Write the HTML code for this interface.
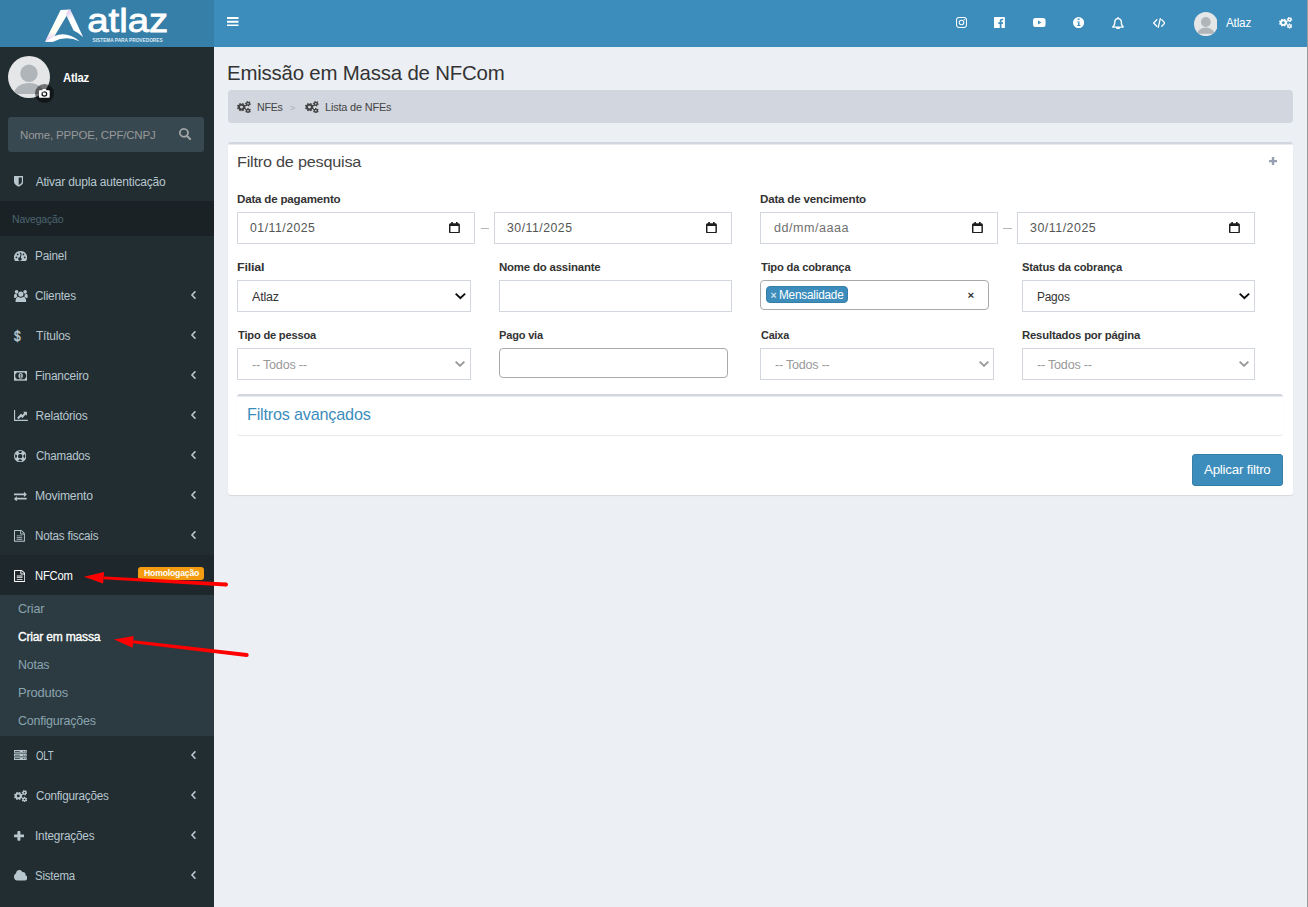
<!DOCTYPE html>
<html lang="pt-br">
<head>
<meta charset="utf-8">
<title>Emissão em Massa de NFCom</title>
<style>
*{box-sizing:border-box}
html,body{margin:0;padding:0}
body{width:1308px;height:907px;overflow:hidden;position:relative;background:#ecf0f5;font-family:"Liberation Sans",sans-serif;font-size:12px;letter-spacing:-0.2px;color:#333;line-height:16px}
svg{display:block;position:absolute}
div,span,h1,h3,a,label,button{position:absolute;white-space:nowrap;margin:0;padding:0;transform-origin:0 50%}
#logo{left:0;top:0;width:214px;height:46.5px;background:#367fa9}
#navbar{left:214px;top:0;width:1094px;height:46.5px;background:#3c8dbc;color:#fff}
#navname{left:1012px;top:15px;font-size:12.2px;line-height:16px;color:#fff}
#sidebar{left:0;top:46.5px;width:214px;height:860.5px;background:#222d32;color:#b8c7ce}
#uname{left:63.5px;top:70px;font-weight:700;font-size:12px;color:#fff;line-height:16px}
#search{left:8px;top:116.5px;width:196px;height:35.5px;background:#374850;border-radius:3px}
#ph{left:13px;top:1px;line-height:35.5px;font-size:11.8px;color:#999}
.navhdr{left:0;top:201px;width:214px;height:35px;background:#1a2226;color:#4b646f;font-size:10.4px}
#navhdr{left:12.7px;top:1.2px;line-height:35px}
.mi{left:0;width:214px;height:40px;color:#b8c7ce}
.mi.act{background:#1e282c;color:#fff}
.mi .tx{left:35.3px;top:0;line-height:40px;font-size:12px}
.mi .dl{left:14.3px;top:0;line-height:40px;font-size:14px;letter-spacing:0;-webkit-text-stroke:.45px #b8c7ce;transform:scaleX(.86)}
#submenu{left:0;top:595px;width:214px;height:141px;background:#2c3b41}
.sub{left:17.8px;color:#8aa4af;font-size:12.2px;line-height:28px}
.sub.on{color:#fff;-webkit-text-stroke:.35px #fff}
#bdg{left:138px;top:567.3px;width:66px;height:12.6px;background:#f39c12;border-radius:3px;color:#fff}
#badge{left:5.5px;top:0;line-height:12.6px;font-size:8.6px;font-weight:700}
h1{left:228.5px;top:59.2px;font-weight:400;font-size:20.6px;line-height:28px;color:#333}
#bc{left:228px;top:90px;width:1065px;height:33px;background:#d2d6de;border-radius:4px;font-size:11.2px;color:#444}
#bc span{top:1px;line-height:33px}
#box{left:228px;top:142px;width:1065px;height:353px;background:#fff;border-top:3px solid #d2d6de;border-radius:3px;box-shadow:0 1px 1px rgba(0,0,0,.1)}
#box h3{left:9.6px;top:5.4px;font-size:15.4px;line-height:24px;font-weight:400;color:#444}
.lbl{font-weight:700;font-size:11.8px;line-height:16px;color:#333}
.fc{height:31.6px;border:1px solid #d2d6de;background:#fff;font-size:12px;color:#555}
.fc span{left:14.2px;top:1px;line-height:30.6px}
.fc.dt span{left:12.6px;top:0;letter-spacing:.5px}
.fc.ph span{color:#999}
#d3{color:#707070}
.fc.dk span{color:#333}
.s2{border:1px solid #aaa;border-radius:4px;background:#fff}
#tagb{left:5px;top:5.3px;width:82px;height:17px;background:#3c8dbc;border:1px solid #367fa9;border-radius:4px;color:#fff;font-size:12px}
#inner{left:9px;top:249px;width:1046px;height:41px;background:#fff;border-top:3px solid #d2d6de;border-radius:3px;box-shadow:0 1px 1px rgba(0,0,0,.1)}
#adv{left:10.6px;top:6px;font-size:15.7px;line-height:24px;color:#3c8dbc}
#btnb{left:964px;top:309px;width:91px;height:32px;background:#3c8dbc;border:1px solid #367fa9;border-radius:3px;color:#fff;font-size:12.6px}
#btn{left:11px;top:0;line-height:30px}
#edge{left:1307px;top:0;width:1px;height:907px;background:#9a9a9a}
</style>
</head>
<body>

<div id="logo">
<svg viewBox="0 0 214 46.5" width="214" height="46.5" style="left:0;top:0">
<defs><linearGradient id="lg1" x1="0" y1="0" x2="0" y2="1"><stop offset="0" stop-color="#fff"/><stop offset=".7" stop-color="#fffff4"/><stop offset="1" stop-color="#dcc4ee"/></linearGradient>
<linearGradient id="lg2" x1="0" y1="0" x2="0.3" y2="1"><stop offset="0" stop-color="#d9c0ec"/><stop offset=".4" stop-color="#fff"/><stop offset="1" stop-color="#fff"/></linearGradient></defs>
<path d="M60.6 10 L70.3 9.6 L54.6 36.1 L53 41.7 L44.9 41.7 Z" fill="url(#lg1)"/>
<path d="M70.3 9.6 L83.1 37.1 Q78.5 32.800 73.6 30.6 L65.9 14.5 L68.5 9.700 Z" fill="url(#lg2)"/>
<path d="M44.9 41.7 L54.6 36 Q67 31 79.6 41.2 Q66 35 53.2 41.7 Z" fill="#fff"/>
<text x="87.2" y="32.2" font-family="Liberation Sans, sans-serif" font-size="33.8" letter-spacing="0" fill="#fff" stroke="#fff" stroke-width=".8" textLength="81" lengthAdjust="spacingAndGlyphs">atlaz</text>
<text x="92.6" y="41.7" font-family="Liberation Sans, sans-serif" font-size="4.9" letter-spacing="0" font-weight="700" fill="#dfeaf2" textLength="70" lengthAdjust="spacingAndGlyphs">SISTEMA PARA PROVEDORES</text>
</svg>
</div>
<div id="navbar">
<svg viewBox="0 1 12 10" preserveAspectRatio="none" width="11.50" height="9.40" fill="#fff" style="left:13.10px;top:16.80px;color:#fff"><path d="M0 1h12v2H0zM0 5h12v2H0zM0 9h12v2H0z"/></svg>
<svg viewBox="0.7 0.7 14.6 14.6" preserveAspectRatio="none" width="11.00" height="11.00" fill="#fff" style="left:741.90px;top:17.00px;color:#fff"><path fill-rule="evenodd" d="M4.600.7h6.800c2.200 0 3.900 1.700 3.900 3.900v6.800c0 2.200-1.700 3.900-3.900 3.900H4.600C2.400 15.300.7 13.600.7 11.400V4.600C.7 2.400 2.400.7 4.600.7zm.1 1.400c-1.500 0-2.600 1.100-2.600 2.600v6.600c0 1.500 1.100 2.600 2.600 2.600h6.600c1.500 0 2.600-1.100 2.600-2.600V4.700c0-1.500-1.100-2.600-2.600-2.600zM8 4.300a3.700 3.700 0 1 1 0 7.400 3.700 3.700 0 0 1 0-7.400zm0 1.300a2.400 2.400 0 1 0 0 4.800 2.400 2.400 0 0 0 0-4.800zm3.900-2.400a.9.900 0 1 1 0 1.800.9.900 0 0 1 0-1.800z"/></svg>
<svg viewBox="0.7 0.7 14.6 14.6" preserveAspectRatio="none" width="10.90" height="11.20" fill="#fff" style="left:780.30px;top:17.00px;color:#fff"><path d="M14.400.7c.5 0 .9.400.9.900v12.800c0 .5-.4.900-.9.900h-3.700V9.700h1.900l.3-2.200h-2.200V6.100c0-.6.200-1.100 1.100-1.100h1.200V3.100c-.2 0-.9-.1-1.700-.1-1.700 0-2.900 1-2.900 2.900v1.600H6.500v2.200h1.900v5.600H1.600c-.5 0-.9-.4-.9-.9V1.600c0-.5.400-.9.900-.9z"/></svg>
<svg viewBox="0 0.4 16 11.2" preserveAspectRatio="none" width="12.60" height="9.00" fill="#fff" style="left:819.00px;top:18.00px;color:#fff"><path fill-rule="evenodd" d="M15.700 2.100c.3 1.300.3 3.900.3 3.900s0 2.600-.3 3.900c-.2.700-.7 1.200-1.400 1.400-1.300.3-6.300.3-6.300.3s-5 0-6.300-.3C1 11.100.5 10.600.3 9.900 0 8.600 0 6 0 6s0-2.600.3-3.900C.5 1.400 1 .900 1.700.700 3 .4 8 .4 8 .4s5 0 6.300.3c.7.200 1.200.7 1.400 1.400zM6.400 3.600v4.800L10.600 6z"/></svg>
<svg viewBox="0.6 0.6 14.8 14.8" preserveAspectRatio="none" width="11.20" height="11.20" fill="#fff" style="left:859.10px;top:17.00px;color:#fff"><path fill-rule="evenodd" d="M8 .6a7.400 7.400 0 1 1 0 14.800A7.400 7.400 0 0 1 8 .6zM6.800 2.700v1.900h2.400V2.700zm-.6 3.700v1.200h1.200v3.700H6.200v1.200h4.200v-1.200H9.200V6.400z"/></svg>
<svg viewBox="0.7 0 14.6 16" preserveAspectRatio="none" width="12.10" height="12.60" fill="#fff" style="left:898.20px;top:16.50px;color:#fff"><path fill-rule="evenodd" d="M8 0c.6 0 1 .4 1 1v.4c2.300.5 3.800 2.400 3.800 4.900 0 3.400 1.200 4.900 2.500 6 0 .7-.6 1.200-1.200 1.200h-3.700c0 1.400-1.100 2.500-2.400 2.500S5.600 14.900 5.600 13.500H1.900c-.6 0-1.200-.5-1.200-1.200 1.300-1.100 2.500-2.600 2.500-6C3.200 3.800 4.700 1.900 7 1.400V1c0-.6.400-1 1-1zm0 3c-1.800 0-3.100 1.400-3.100 3.400 0 2.700-.7 4.500-1.700 5.700h9.600c-1-1.200-1.700-3-1.700-5.700 0-2-1.300-3.400-3.100-3.400z"/></svg>
<svg viewBox="0.3 0.1 17.4 13.8" preserveAspectRatio="none" width="12.60" height="10.00" fill="#fff" style="left:938.70px;top:18.00px;color:#fff"><path d="M5.600 2.600 1.200 7l4.400 4.400M12.400 2.600 16.800 7l-4.400 4.400M10.400 1 7.600 13" fill="none" stroke="currentColor" stroke-width="1.800" stroke-linecap="round" stroke-linejoin="round"/></svg>
<svg viewBox="0 0 42 42" width="23.7" height="24.2" preserveAspectRatio="none" style="left:979.7px;top:11.8px"><defs><clipPath id="c1"><circle cx="21" cy="21" r="21"/></clipPath></defs><circle cx="21" cy="21" r="21" fill="#e4e6e7"/><g clip-path="url(#c1)" fill="#b0b5b9"><circle cx="21" cy="17.3" r="8.7"/><path d="M6 37.900A15 10.900 0 0 1 36 37.900z"/></g></svg>
<span id="navname" style="margin-left:0.10px;transform:scaleX(0.9600)">Atlaz</span>
<svg viewBox="0.15 -0.08 16.65 16.12" preserveAspectRatio="none" width="13.40" height="11.60" fill="#fff" style="left:1065.30px;top:17.00px;color:#fff"><path fill-rule="evenodd" d="M9.94 8.50 L10.85 9.08 L10.19 10.67 L9.14 10.45 L8.15 11.44 L8.37 12.49 L6.78 13.15 L6.20 12.24 L4.80 12.24 L4.22 13.15 L2.63 12.49 L2.85 11.44 L1.86 10.45 L0.81 10.67 L0.15 9.08 L1.06 8.50 L1.06 7.10 L0.15 6.52 L0.81 4.93 L1.86 5.15 L2.85 4.16 L2.63 3.11 L4.22 2.45 L4.80 3.36 L6.20 3.36 L6.78 2.45 L8.37 3.11 L8.15 4.16 L9.14 5.15 L10.19 4.93 L10.85 6.52 L9.94 7.10ZM3.70 7.80a1.80 1.80 0 1 0 3.60 0a1.80 1.80 0 1 0 -3.60 0ZM15.88 3.19 L16.80 3.47 L16.50 4.93 L15.55 4.83 L14.81 5.67 L15.03 6.60 L13.61 7.08 L13.23 6.20 L12.13 5.98 L11.43 6.63 L10.31 5.64 L10.87 4.87 L10.52 3.81 L9.60 3.53 L9.90 2.07 L10.85 2.17 L11.59 1.33 L11.37 0.40 L12.79 -0.08 L13.17 0.80 L14.27 1.02 L14.97 0.37 L16.09 1.36 L15.53 2.13ZM12.25 3.50a0.95 0.95 0 1 0 1.90 0a0.95 0.95 0 1 0 -1.90 0ZM15.85 13.00 L16.65 13.53 L15.93 14.85 L15.05 14.46 L14.09 15.05 L14.03 16.00 L12.53 16.04 L12.43 15.09 L11.44 14.55 L10.58 14.97 L9.80 13.69 L10.57 13.12 L10.55 12.00 L9.75 11.47 L10.47 10.15 L11.35 10.54 L12.31 9.95 L12.37 9.00 L13.87 8.96 L13.97 9.91 L14.96 10.45 L15.82 10.03 L16.60 11.31 L15.83 11.88ZM12.25 12.50a0.95 0.95 0 1 0 1.90 0a0.95 0.95 0 1 0 -1.90 0Z"/></svg>
</div>
<div id="sidebar">
<div style="left:0;top:-46.5px;width:214px;height:907px">
<svg viewBox="0 0 42 42" width="42" height="42" style="left:8px;top:56px"><defs><clipPath id="c2"><circle cx="21" cy="21" r="21"/></clipPath></defs><circle cx="21" cy="21" r="21" fill="#e4e6e7"/><g clip-path="url(#c2)" fill="#b0b5b9"><circle cx="21" cy="17.3" r="8.7"/><path d="M6 37.900A15 10.900 0 0 1 36 37.900z"/></g></svg>
<div style="left:35px;top:84px;width:19px;height:19px;border-radius:9.5px;background:rgba(0,0,0,.5)"></div>
<svg viewBox="1 1.5 14 13" preserveAspectRatio="none" width="10.70" height="8.80" fill="#fff" style="left:39.30px;top:89.10px;color:#fff"><path fill-rule="evenodd" d="M5.500 2.500C5.700 1.800 6 1.500 6.600 1.500h2.800c.6 0 .9.300 1.100 1l.3.900h2.800c.8 0 1.400.600 1.400 1.400v8.300c0 .8-.6 1.400-1.400 1.400H2.400c-.8 0-1.400-.6-1.400-1.400V4.800c0-.8.600-1.400 1.400-1.400h2.800zM8 5a3.900 3.900 0 1 0 0 7.800A3.900 3.900 0 0 0 8 5zm0 1.700a2.200 2.200 0 1 1 0 4.400 2.200 2.200 0 0 1 0-4.400z"/></svg>
<span id="uname" style="margin-left:-0.30px;transform:scaleX(0.9428)">Atlaz</span>
<div id="search"><span id="ph" style="margin-left:-0.65px;transform:scaleX(0.9774)">Nome, PPPOE, CPF/CNPJ</span><svg viewBox="0.608 0.5 14.867 15.275" preserveAspectRatio="none" width="12.40" height="12.30" fill="#a2a5a6" style="left:170.70px;top:11.30px;color:#a2a5a6"><path fill-rule="evenodd" d="M6.500.5a6 6 0 0 1 4.900 9.400l3.700 3.700c.5.500.5 1.300 0 1.800s-1.300.500-1.800 0L9.600 11.700A6 6 0 1 1 6.500.5zm0 2.200a3.800 3.800 0 1 0 0 7.600 3.800 3.800 0 0 0 0-7.600z"/></svg></div>
<div class="mi" style="top:161.5px"><svg viewBox="1 0.8 12 14.375" preserveAspectRatio="none" width="9.40" height="10.60" fill="currentColor" style="left:14.00px;top:14.80px"><path fill-rule="evenodd" d="M1 1.500c0-.4.300-.700.700-.700h10.600c.4 0 .7.300.7.700v7c0 3.600-4.500 6-5.700 6.600-.2.100-.4.100-.6 0C5.500 14.500 1 12.100 1 8.500zM11 2.800H7v10.300c1.500-.8 4-2.500 4-4.600z"/></svg><span id="m_ativar" class="tx" style="margin-left:0.36px">Ativar dupla autenticação</span></div>
<div class="navhdr"><span id="navhdr" style="margin-left:-0.42px;transform:scaleX(1.0114)">Navegação</span></div>
<div class="mi" style="top:237.0px">
<svg viewBox="0.589 1.6 14.822 11.9" preserveAspectRatio="none" width="13.10" height="10.40" fill="currentColor" style="left:14.00px;top:13.90px"><path d="M8 1.6A7.4 7.4 0 0 0 1.7 12.9c.2.4.6.6 1 .6h10.6c.4 0 .8-.2 1-.6A7.4 7.4 0 0 0 8 1.6z"/><g fill="#222d32"><circle cx="3.3" cy="9" r="1"/><circle cx="4.7" cy="5.6" r="1"/><circle cx="8" cy="4.2" r="1"/><circle cx="11.3" cy="5.6" r="1"/><circle cx="12.7" cy="9" r="1"/><path d="M9.3 5.4l-1 3.8a1.9 1.9 0 1 1-1.1-.3l1-3.8z"/></g></svg>
<span id="m_Painel" class="tx" style="line-height:39.2px;margin-left:-0.19px;transform:scaleX(0.9816)">Painel</span>
</div>
<div class="mi" style="top:277.0px">
<svg viewBox="0 0.6 16 14.6" preserveAspectRatio="none" width="13.70" height="12.80" fill="currentColor" style="left:14.00px;top:12.50px"><circle cx="8" cy="5.2" r="3"/><path d="M3.500 15.2c-1 0-1.700-.6-1.700-1.600 0-2.800.9-5.300 3.200-5.300.8.800 1.900 1.200 3 1.200s2.200-.4 3-1.200c2.300 0 3.200 2.500 3.200 5.300 0 1-.7 1.600-1.700 1.600z"/><circle cx="3" cy="2.700" r="2.100"/><circle cx="13" cy="2.700" r="2.100"/><path d="M0 7.700c0-1.600.5-2.700 1.800-2.700.5.500 1.200.700 1.900.600-.2.500-.3 1.100-.2 1.700.1.400.2.800.4 1.200-1.100 0-1.800.500-2.300 1.300H1c-.6 0-1-.400-1-1.100zM16 7.700c0-1.600-.5-2.700-1.800-2.700-.5.500-1.200.700-1.900.600.2.500.3 1.100.2 1.700-.1.400-.2.800-.4 1.200 1.100 0 1.800.500 2.300 1.300H15c.6 0 1-.400 1-1.100z"/></svg>
<span id="m_Clientes" class="tx" style="line-height:39.2px;margin-left:-0.30px;transform:scaleX(0.9779)">Clientes</span>
<svg viewBox="0.65 1.45 5.8 10.1" preserveAspectRatio="none" width="4.80" height="8.00" fill="currentColor" style="left:190.80px;top:14.30px"><path d="M6.3 2.200c.2.200.2.500 0 .7L3.100 6.500l3.200 3.600c.2.200.2.500 0 .7l-.6.600c-.2.200-.5.200-.7 0L.8 6.900c-.2-.2-.2-.5 0-.7L5 1.600c.2-.2.500-.2.700 0z"/></svg>
</div>
<div class="mi" style="top:317.0px">
<span class="dl" style="line-height:39.2px">$</span>
<span id="m_Titulos" class="tx" style="line-height:39.2px;margin-left:0.30px;transform:scaleX(0.9924)">Títulos</span>
<svg viewBox="0.65 1.45 5.8 10.1" preserveAspectRatio="none" width="4.80" height="8.00" fill="currentColor" style="left:190.80px;top:14.30px"><path d="M6.3 2.200c.2.200.2.500 0 .7L3.100 6.500l3.200 3.600c.2.200.2.500 0 .7l-.6.600c-.2.200-.5.200-.7 0L.8 6.900c-.2-.2-.2-.5 0-.7L5 1.600c.2-.2.500-.2.700 0z"/></svg>
</div>
<div class="mi" style="top:357.0px">
<svg viewBox="0 3 16 10" preserveAspectRatio="none" width="13.40" height="9.70" fill="currentColor" style="left:14.10px;top:13.90px"><path d="M0 3h16v10H0z"/><g fill="#222d32"><path d="M1.500 6.200A2 2 0 0 0 3.200 4.500h9.600a2 2 0 0 0 1.700 1.700v3.600a2 2 0 0 0-1.700 1.700H3.200a2 2 0 0 0-1.700-1.700z"/></g><ellipse cx="8" cy="8" rx="2.600" ry="3"/><path fill="#222d32" d="M7 9.300h.7V7.100l-.6.200v-.6l1-.5h.5v3.100H9v.6H7z"/></svg>
<span id="m_Financeiro" class="tx" style="line-height:39.2px;margin-left:-0.29px;transform:scaleX(0.9913)">Financeiro</span>
<svg viewBox="0.65 1.45 5.8 10.1" preserveAspectRatio="none" width="4.80" height="8.00" fill="currentColor" style="left:190.80px;top:14.30px"><path d="M6.3 2.200c.2.200.2.500 0 .7L3.100 6.500l3.200 3.600c.2.200.2.500 0 .7l-.6.600c-.2.200-.5.200-.7 0L.8 6.900c-.2-.2-.2-.5 0-.7L5 1.600c.2-.2.500-.2.700 0z"/></svg>
</div>
<div class="mi" style="top:397.0px">
<svg viewBox="0 2 16 12" preserveAspectRatio="none" width="13.80" height="11.00" fill="currentColor" style="left:14.10px;top:13.20px"><path d="M0 2h1.300v10.700H16V14H0z"/><path d="M15 4.200v3.600c0 .3-.3.400-.5.200l-1-1-3.600 3.600c-.1.100-.3.100-.4 0L8.200 9.300 5.300 12.200l-1.700-1.700L8 6.100c.1-.1.300-.1.400 0l1.300 1.300L11.800 5.300l-1-1c-.2-.2-.1-.5.200-.5h3.600c.2 0 .4.200.4.400z"/></svg>
<span id="m_Relatorios" class="tx" style="line-height:39.2px;margin-left:0.21px">Relatórios</span>
<svg viewBox="0.65 1.45 5.8 10.1" preserveAspectRatio="none" width="4.80" height="8.00" fill="currentColor" style="left:190.80px;top:14.30px"><path d="M6.3 2.200c.2.200.2.500 0 .7L3.100 6.500l3.200 3.600c.2.200.2.500 0 .7l-.6.600c-.2.200-.5.200-.7 0L.8 6.900c-.2-.2-.2-.5 0-.7L5 1.600c.2-.2.500-.2.700 0z"/></svg>
</div>
<div class="mi" style="top:437.0px">
<svg viewBox="0.8 0.8 14.4 14.4" preserveAspectRatio="none" width="12.40" height="12.30" fill="currentColor" style="left:14.10px;top:12.80px"><path fill-rule="evenodd" d="M8 .8a7.200 7.200 0 1 1 0 14.400A7.200 7.200 0 0 1 8 .8zm0 1.300c-.9 0-1.800.2-2.500.6l1.600 1.600a3.800 3.800 0 0 1 1.800 0l1.600-1.600c-.7-.4-1.600-.6-2.500-.6zM2.700 5.500A5.900 5.900 0 0 0 2.700 10.500l1.600-1.600a3.800 3.800 0 0 1 0-1.800zM13.300 5.500l-1.600 1.600a3.800 3.800 0 0 1 0 1.800l1.600 1.600a5.900 5.900 0 0 0 0-5zM8 5.400a2.600 2.600 0 1 0 0 5.200 2.600 2.600 0 0 0 0-5.200zM7.100 11.700l-1.600 1.600a5.900 5.900 0 0 0 5 0l-1.600-1.600a3.800 3.800 0 0 1-1.800 0z"/></svg>
<span id="m_Chamados" class="tx" style="line-height:39.2px;margin-left:0.63px;transform:scaleX(0.9591)">Chamados</span>
<svg viewBox="0.65 1.45 5.8 10.1" preserveAspectRatio="none" width="4.80" height="8.00" fill="currentColor" style="left:190.80px;top:14.30px"><path d="M6.3 2.200c.2.200.2.500 0 .7L3.100 6.500l3.200 3.600c.2.200.2.500 0 .7l-.6.600c-.2.200-.5.200-.7 0L.8 6.900c-.2-.2-.2-.5 0-.7L5 1.600c.2-.2.500-.2.700 0z"/></svg>
</div>
<div class="mi" style="top:477.0px">
<svg viewBox="0 1.896 16 12.208" preserveAspectRatio="none" width="12.70" height="9.20" fill="currentColor" style="left:14.10px;top:14.70px"><path d="M16 5.200c0 .1 0 .2-.1.200l-2.900 2.900c-.2.200-.5 0-.5-.2V6.300H.3C.1 6.300 0 6.200 0 6V4.300C0 4.100.1 4 .3 4h12.200V2.200c0-.3.300-.4.500-.2l2.900 2.900c.1.100.1.200.1.300zM16 10v1.700c0 .2-.1.300-.3.300H3.500v1.800c0 .3-.3.400-.5.200L.1 11.100C0 11 0 10.800.1 10.700L3 7.800c.2-.2.500-.1.500.2v1.700h12.200c.2 0 .3.100.3.300z"/></svg>
<span id="m_Movimento" class="tx" style="line-height:39.2px;margin-left:-0.22px;transform:scaleX(1.0143)">Movimento</span>
<svg viewBox="0.65 1.45 5.8 10.1" preserveAspectRatio="none" width="4.80" height="8.00" fill="currentColor" style="left:190.80px;top:14.30px"><path d="M6.3 2.200c.2.200.2.500 0 .7L3.100 6.500l3.200 3.600c.2.200.2.500 0 .7l-.6.600c-.2.200-.5.200-.7 0L.8 6.900c-.2-.2-.2-.5 0-.7L5 1.600c.2-.2.500-.2.700 0z"/></svg>
</div>
<div class="mi" style="top:517.0px">
<svg viewBox="0 0 14 16" preserveAspectRatio="none" width="10.90" height="11.80" fill="currentColor" style="left:14.10px;top:13.20px"><path fill-rule="evenodd" d="M13.100 3.400c.5.500.9 1.400.9 2.100v9.600c0 .5-.4.900-.9.900H.9c-.5 0-.9-.4-.9-.9V.9C0 .4.400 0 .9 0h7.800c.7 0 1.600.4 2.100.9zM9.100 1.300v3.400h3.400c-.1-.2-.2-.4-.3-.5L9.600 1.600c-.1-.1-.3-.2-.5-.3zM12.700 14.700V6H9.100c-.7 0-1.200-.5-1.200-1.200V1.300H1.300v13.400zM3.400 7.700c0-.2.100-.3.300-.3h6.600c.2 0 .3.100.3.300v.6c0 .2-.1.300-.3.300H3.700c-.2 0-.3-.1-.3-.3zm6.900 2c.2 0 .3.100.3.300v.6c0 .2-.1.300-.3.300H3.700c-.2 0-.3-.1-.3-.3V10c0-.2.100-.3.300-.3zm0 2.300c.2 0 .3.100.3.300v.6c0 .2-.1.300-.3.300H3.700c-.2 0-.3-.1-.3-.3v-.6c0-.2.100-.3.300-.3z"/></svg>
<span id="m_Notasfiscais" class="tx" style="line-height:39.2px;margin-left:-0.18px;transform:scaleX(0.9682)">Notas fiscais</span>
<svg viewBox="0.65 1.45 5.8 10.1" preserveAspectRatio="none" width="4.80" height="8.00" fill="currentColor" style="left:190.80px;top:14.30px"><path d="M6.3 2.200c.2.200.2.500 0 .7L3.100 6.500l3.200 3.600c.2.200.2.500 0 .7l-.6.600c-.2.200-.5.200-.7 0L.8 6.900c-.2-.2-.2-.5 0-.7L5 1.600c.2-.2.500-.2.700 0z"/></svg>
</div>
<div class="mi act" style="top:555.4px;height:39.7px">
<svg viewBox="0 0 14 16" preserveAspectRatio="none" width="11.30" height="11.90" fill="currentColor" style="left:13.90px;top:14.50px"><path fill-rule="evenodd" d="M13.100 3.400c.5.500.9 1.400.9 2.100v9.600c0 .5-.4.900-.9.900H.9c-.5 0-.9-.4-.9-.9V.9C0 .4.400 0 .9 0h7.800c.7 0 1.600.4 2.100.9zM9.100 1.300v3.400h3.400c-.1-.2-.2-.4-.3-.5L9.600 1.600c-.1-.1-.3-.2-.5-.3zM12.700 14.700V6H9.100c-.7 0-1.200-.5-1.200-1.200V1.300H1.300v13.400zM3.400 7.700c0-.2.100-.3.300-.3h6.600c.2 0 .3.100.3.300v.6c0 .2-.1.300-.3.300H3.700c-.2 0-.3-.1-.3-.3zm6.900 2c.2 0 .3.100.3.300v.6c0 .2-.1.300-.3.300H3.700c-.2 0-.3-.1-.3-.3V10c0-.2.100-.3.300-.3zm0 2.300c.2 0 .3.100.3.300v.6c0 .2-.1.300-.3.300H3.700c-.2 0-.3-.1-.3-.3v-.6c0-.2.100-.3.300-.3z"/></svg>
<span id="m_NFCom" class="tx" style="line-height:43.0px;margin-left:-0.76px;transform:scaleX(0.9364)">NFCom</span>
</div>
<div class="mi" style="top:736.0px">
<svg viewBox="0 1.2 16 13.7" preserveAspectRatio="none" width="12.70" height="10.10" fill="currentColor" style="left:14.10px;top:14.20px"><path fill-rule="evenodd" d="M0 1.200h16v3.900H0zm0 4.900h16V10H0zm0 4.900h16v3.900H0zM1.200 2.600v1.100h6V2.600zm0 4.900v1.100h6V7.500zm0 4.900v1.100h6v-1.100zM11.300 2.600v1.100h1.200V2.600zm2.200 0v1.100h1.200V2.600zm-2.200 4.900v1.100h1.200V7.500zm2.200 0v1.100h1.200V7.500zm-2.200 4.900v1.100h1.200v-1.100zm2.200 0v1.100h1.200v-1.100z"/></svg>
<span id="m_OLT" class="tx" style="line-height:40.6px;margin-left:0.51px;transform:scaleX(0.8007)">OLT</span>
<svg viewBox="0.65 1.45 5.8 10.1" preserveAspectRatio="none" width="4.80" height="8.00" fill="currentColor" style="left:190.80px;top:15.00px"><path d="M6.3 2.200c.2.200.2.500 0 .7L3.100 6.500l3.200 3.600c.2.200.2.500 0 .7l-.6.600c-.2.200-.5.200-.7 0L.8 6.900c-.2-.2-.2-.5 0-.7L5 1.600c.2-.2.500-.2.700 0z"/></svg>
</div>
<div class="mi" style="top:776.0px">
<svg viewBox="0.15 -0.08 16.65 16.12" preserveAspectRatio="none" width="13.40" height="12.20" fill="currentColor" style="left:14.10px;top:13.90px"><path fill-rule="evenodd" d="M9.94 8.50 L10.85 9.08 L10.19 10.67 L9.14 10.45 L8.15 11.44 L8.37 12.49 L6.78 13.15 L6.20 12.24 L4.80 12.24 L4.22 13.15 L2.63 12.49 L2.85 11.44 L1.86 10.45 L0.81 10.67 L0.15 9.08 L1.06 8.50 L1.06 7.10 L0.15 6.52 L0.81 4.93 L1.86 5.15 L2.85 4.16 L2.63 3.11 L4.22 2.45 L4.80 3.36 L6.20 3.36 L6.78 2.45 L8.37 3.11 L8.15 4.16 L9.14 5.15 L10.19 4.93 L10.85 6.52 L9.94 7.10ZM3.70 7.80a1.80 1.80 0 1 0 3.60 0a1.80 1.80 0 1 0 -3.60 0ZM15.88 3.19 L16.80 3.47 L16.50 4.93 L15.55 4.83 L14.81 5.67 L15.03 6.60 L13.61 7.08 L13.23 6.20 L12.13 5.98 L11.43 6.63 L10.31 5.64 L10.87 4.87 L10.52 3.81 L9.60 3.53 L9.90 2.07 L10.85 2.17 L11.59 1.33 L11.37 0.40 L12.79 -0.08 L13.17 0.80 L14.27 1.02 L14.97 0.37 L16.09 1.36 L15.53 2.13ZM12.25 3.50a0.95 0.95 0 1 0 1.90 0a0.95 0.95 0 1 0 -1.90 0ZM15.85 13.00 L16.65 13.53 L15.93 14.85 L15.05 14.46 L14.09 15.05 L14.03 16.00 L12.53 16.04 L12.43 15.09 L11.44 14.55 L10.58 14.97 L9.80 13.69 L10.57 13.12 L10.55 12.00 L9.75 11.47 L10.47 10.15 L11.35 10.54 L12.31 9.95 L12.37 9.00 L13.87 8.96 L13.97 9.91 L14.96 10.45 L15.82 10.03 L16.60 11.31 L15.83 11.88ZM12.25 12.50a0.95 0.95 0 1 0 1.90 0a0.95 0.95 0 1 0 -1.90 0Z"/></svg>
<span id="m_Configuracoes" class="tx" style="line-height:40.6px;margin-left:0.35px;transform:scaleX(0.9722)">Configurações</span>
<svg viewBox="0.65 1.45 5.8 10.1" preserveAspectRatio="none" width="4.80" height="8.00" fill="currentColor" style="left:190.80px;top:15.00px"><path d="M6.3 2.200c.2.200.2.500 0 .7L3.100 6.500l3.200 3.600c.2.200.2.500 0 .7l-.6.600c-.2.200-.5.200-.7 0L.8 6.900c-.2-.2-.2-.5 0-.7L5 1.600c.2-.2.500-.2.700 0z"/></svg>
</div>
<div class="mi" style="top:816.0px">
<svg viewBox="0 1.3 12.6 13.1" preserveAspectRatio="none" width="10.20" height="9.70" fill="currentColor" style="left:14.10px;top:14.90px"><path d="M12.600 6.900v1.900c0 .5-.4.900-.9.900H7.900v3.800c0 .5-.4.900-.9.900H5.100c-.5 0-.9-.4-.9-.9V9.700H.4c0 0-.4 0-.4-.9V6.900C0 6.400.4 6 .9 6h3.300V2.200c0-.5.400-.9.900-.9H7c.5 0 .9.400.9.900V6h3.800c.5 0 .9.400.9.900z"/></svg>
<span id="m_Integracoes" class="tx" style="line-height:40.6px;margin-left:-0.43px;transform:scaleX(0.9819)">Integrações</span>
<svg viewBox="0.65 1.45 5.8 10.1" preserveAspectRatio="none" width="4.80" height="8.00" fill="currentColor" style="left:190.80px;top:15.00px"><path d="M6.3 2.200c.2.200.2.500 0 .7L3.100 6.500l3.200 3.600c.2.200.2.500 0 .7l-.6.600c-.2.200-.5.200-.7 0L.8 6.900c-.2-.2-.2-.5 0-.7L5 1.600c.2-.2.500-.2.700 0z"/></svg>
</div>
<div class="mi" style="top:856.0px">
<svg viewBox="-0.041 2.793 16.041 10.707" preserveAspectRatio="none" width="13.40" height="10.40" fill="currentColor" style="left:14.10px;top:14.20px"><path d="M16 10.300a3.200 3.200 0 0 1-3.200 3.200H3.700A3.700 3.700 0 0 1 2.200 6.400a4.300 4.300 0 0 1 8-1.400 2.700 2.700 0 0 1 3.600 2.500c0 .2 0 .4-.1.600A3.200 3.200 0 0 1 16 10.300z"/></svg>
<span id="m_Sistema" class="tx" style="line-height:40.6px;margin-left:0.05px;transform:scaleX(0.9509)">Sistema</span>
<svg viewBox="0.65 1.45 5.8 10.1" preserveAspectRatio="none" width="4.80" height="8.00" fill="currentColor" style="left:190.80px;top:15.00px"><path d="M6.3 2.200c.2.200.2.500 0 .7L3.100 6.500l3.200 3.600c.2.200.2.500 0 .7l-.6.600c-.2.200-.5.200-.7 0L.8 6.900c-.2-.2-.2-.5 0-.7L5 1.600c.2-.2.500-.2.700 0z"/></svg>
</div>
<div id="bdg"><span id="badge" style="margin-left:0.09px;transform:scaleX(1.0105)">Homologação</span></div>
<div id="submenu"></div>
<span id="s_Criar" class="sub" style="top:595.0px;margin-left:-0.12px;transform:scaleX(1.0276)">Criar</span>
<span id="s_Criaremmassa" class="sub on" style="top:622.9px;margin-left:0.63px;transform:scaleX(0.9889)">Criar em massa</span>
<span id="s_Notas" class="sub" style="top:650.9px;margin-left:0.25px;transform:scaleX(1.0150)">Notas</span>
<span id="s_Produtos" class="sub" style="top:678.8px;margin-left:0.10px;transform:scaleX(1.0614)">Produtos</span>
<span id="s_Configuracoes" class="sub" style="top:706.7px;margin-left:-0.07px;transform:scaleX(1.0235)">Configurações</span>
</div></div>
<h1 id="h1" style="margin-left:-1.06px;transform:scaleX(0.9913)">Emissão em Massa de NFCom</h1>
<div id="bc">
<svg viewBox="0.15 -0.08 16.65 16.12" preserveAspectRatio="none" width="14.00" height="12.40" fill="#444" style="left:9.00px;top:10.60px;color:#444"><path fill-rule="evenodd" d="M9.94 8.50 L10.85 9.08 L10.19 10.67 L9.14 10.45 L8.15 11.44 L8.37 12.49 L6.78 13.15 L6.20 12.24 L4.80 12.24 L4.22 13.15 L2.63 12.49 L2.85 11.44 L1.86 10.45 L0.81 10.67 L0.15 9.08 L1.06 8.50 L1.06 7.10 L0.15 6.52 L0.81 4.93 L1.86 5.15 L2.85 4.16 L2.63 3.11 L4.22 2.45 L4.80 3.36 L6.20 3.36 L6.78 2.45 L8.37 3.11 L8.15 4.16 L9.14 5.15 L10.19 4.93 L10.85 6.52 L9.94 7.10ZM3.70 7.80a1.80 1.80 0 1 0 3.60 0a1.80 1.80 0 1 0 -3.60 0ZM15.88 3.19 L16.80 3.47 L16.50 4.93 L15.55 4.83 L14.81 5.67 L15.03 6.60 L13.61 7.08 L13.23 6.20 L12.13 5.98 L11.43 6.63 L10.31 5.64 L10.87 4.87 L10.52 3.81 L9.60 3.53 L9.90 2.07 L10.85 2.17 L11.59 1.33 L11.37 0.40 L12.79 -0.08 L13.17 0.80 L14.27 1.02 L14.97 0.37 L16.09 1.36 L15.53 2.13ZM12.25 3.50a0.95 0.95 0 1 0 1.90 0a0.95 0.95 0 1 0 -1.90 0ZM15.85 13.00 L16.65 13.53 L15.93 14.85 L15.05 14.46 L14.09 15.05 L14.03 16.00 L12.53 16.04 L12.43 15.09 L11.44 14.55 L10.58 14.97 L9.80 13.69 L10.57 13.12 L10.55 12.00 L9.75 11.47 L10.47 10.15 L11.35 10.54 L12.31 9.95 L12.37 9.00 L13.87 8.96 L13.97 9.91 L14.96 10.45 L15.82 10.03 L16.60 11.31 L15.83 11.88ZM12.25 12.50a0.95 0.95 0 1 0 1.90 0a0.95 0.95 0 1 0 -1.90 0Z"/></svg>
<span id="bc1" style="left:29.4px;margin-left:-0.65px;transform:scaleX(0.9457)">NFEs</span><span style="left:61.8px;color:#aeb2be;font-size:9.5px">&gt;</span>
<svg viewBox="0.15 -0.08 16.65 16.12" preserveAspectRatio="none" width="13.80" height="12.40" fill="#444" style="left:77.00px;top:10.60px;color:#444"><path fill-rule="evenodd" d="M9.94 8.50 L10.85 9.08 L10.19 10.67 L9.14 10.45 L8.15 11.44 L8.37 12.49 L6.78 13.15 L6.20 12.24 L4.80 12.24 L4.22 13.15 L2.63 12.49 L2.85 11.44 L1.86 10.45 L0.81 10.67 L0.15 9.08 L1.06 8.50 L1.06 7.10 L0.15 6.52 L0.81 4.93 L1.86 5.15 L2.85 4.16 L2.63 3.11 L4.22 2.45 L4.80 3.36 L6.20 3.36 L6.78 2.45 L8.37 3.11 L8.15 4.16 L9.14 5.15 L10.19 4.93 L10.85 6.52 L9.94 7.10ZM3.70 7.80a1.80 1.80 0 1 0 3.60 0a1.80 1.80 0 1 0 -3.60 0ZM15.88 3.19 L16.80 3.47 L16.50 4.93 L15.55 4.83 L14.81 5.67 L15.03 6.60 L13.61 7.08 L13.23 6.20 L12.13 5.98 L11.43 6.63 L10.31 5.64 L10.87 4.87 L10.52 3.81 L9.60 3.53 L9.90 2.07 L10.85 2.17 L11.59 1.33 L11.37 0.40 L12.79 -0.08 L13.17 0.80 L14.27 1.02 L14.97 0.37 L16.09 1.36 L15.53 2.13ZM12.25 3.50a0.95 0.95 0 1 0 1.90 0a0.95 0.95 0 1 0 -1.90 0ZM15.85 13.00 L16.65 13.53 L15.93 14.85 L15.05 14.46 L14.09 15.05 L14.03 16.00 L12.53 16.04 L12.43 15.09 L11.44 14.55 L10.58 14.97 L9.80 13.69 L10.57 13.12 L10.55 12.00 L9.75 11.47 L10.47 10.15 L11.35 10.54 L12.31 9.95 L12.37 9.00 L13.87 8.96 L13.97 9.91 L14.96 10.45 L15.82 10.03 L16.60 11.31 L15.83 11.88ZM12.25 12.50a0.95 0.95 0 1 0 1.90 0a0.95 0.95 0 1 0 -1.90 0Z"/></svg>
<span id="bc2" style="left:98px;margin-left:-0.79px;transform:scaleX(0.9811)">Lista de NFEs</span>
</div>
<div id="box">
<div style="left:0;top:-1px;width:1065px;height:1px;background:#e8ebef"></div>
<h3 id="h3" style="margin-left:-0.72px;transform:scaleX(1.0526)">Filtro de pesquisa</h3>
<svg viewBox="0 1.3 12.6 13.1" preserveAspectRatio="none" width="8.40" height="8.10" fill="#97a0b3" style="left:1041.00px;top:12.30px;color:#97a0b3"><path d="M12.600 6.900v1.900c0 .5-.4.900-.9.900H7.900v3.800c0 .5-.4.900-.9.900H5.100c-.5 0-.9-.4-.9-.9V9.700H.4c0 0-.4 0-.4-.9V6.900C0 6.400.4 6 .9 6h3.300V2.200c0-.5.400-.9.900-.9H7c.5 0 .9.400.9.900V6h3.800c.5 0 .9.400.9.900z"/></svg>
<label id="l_pag" class="lbl" style="left:9.3px;top:45.8px;margin-left:0.17px;transform:scaleX(0.9818)">Data de pagamento</label>
<div class="fc dt" style="left:9.1px;top:67.1px;width:237.9px"><span id="d1" style="margin-left:-0.70px;transform:scaleX(1.0195)">01/11/2025</span><svg viewBox="0 0 12 13" preserveAspectRatio="none" width="10.90" height="11.50" fill="#1d1d1d" style="left:210.90px;top:8.90px;color:#1d1d1d"><path fill-rule="evenodd" d="M2.500 0h1.800v1.300h3.400V0h1.800v1.300h.7C11.200 1.300 12 2.100 12 3.100v8.100c0 1-.8 1.800-1.800 1.800H1.800C.8 13 0 12.200 0 11.200V3.100c0-1 .8-1.800 1.800-1.800h.7zM1.600 4.600v6.500c0 .2.100.3.300.3h8.200c.2 0 .3-.1.300-.3V4.600z"/></svg></div>
<div style="left:252.5px;top:83px;width:8.7px;height:1px;background:#b5b5b5"></div>
<div class="fc dt" style="left:266.1px;top:67.1px;width:237.9px"><span id="d2" style="margin-left:-0.62px;transform:scaleX(1.0201)">30/11/2025</span><svg viewBox="0 0 12 13" preserveAspectRatio="none" width="10.90" height="11.50" fill="#1d1d1d" style="left:210.90px;top:8.90px;color:#1d1d1d"><path fill-rule="evenodd" d="M2.500 0h1.800v1.300h3.400V0h1.800v1.300h.7C11.200 1.300 12 2.100 12 3.100v8.100c0 1-.8 1.800-1.800 1.800H1.800C.8 13 0 12.200 0 11.200V3.100c0-1 .8-1.800 1.800-1.800h.7zM1.600 4.600v6.500c0 .2.100.3.300.3h8.200c.2 0 .3-.1.300-.3V4.600z"/></svg></div>
<label id="l_venc" class="lbl" style="left:532.4px;top:45.8px;margin-left:-0.33px;transform:scaleX(0.9829)">Data de vencimento</label>
<div class="fc dt" style="left:532.1px;top:67.1px;width:237.7px"><span id="d3" style="margin-left:0.35px;transform:scaleX(1.0474)">dd/mm/aaaa</span><svg viewBox="0 0 12 13" preserveAspectRatio="none" width="10.90" height="11.50" fill="#1d1d1d" style="left:210.70px;top:8.90px;color:#1d1d1d"><path fill-rule="evenodd" d="M2.500 0h1.800v1.300h3.400V0h1.800v1.300h.7C11.200 1.300 12 2.100 12 3.100v8.100c0 1-.8 1.800-1.800 1.800H1.800C.8 13 0 12.200 0 11.200V3.100c0-1 .8-1.800 1.800-1.800h.7zM1.600 4.600v6.500c0 .2.100.3.300.3h8.200c.2 0 .3-.1.300-.3V4.600z"/></svg></div>
<div style="left:775.2px;top:83px;width:8.7px;height:1px;background:#b5b5b5"></div>
<div class="fc dt" style="left:789.3px;top:67.1px;width:237.7px"><span id="d4" style="margin-left:-0.74px;transform:scaleX(1.0319)">30/11/2025</span><svg viewBox="0 0 12 13" preserveAspectRatio="none" width="10.90" height="11.50" fill="#1d1d1d" style="left:210.90px;top:8.90px;color:#1d1d1d"><path fill-rule="evenodd" d="M2.500 0h1.800v1.300h3.400V0h1.800v1.300h.7C11.200 1.300 12 2.100 12 3.100v8.100c0 1-.8 1.800-1.800 1.800H1.800C.8 13 0 12.200 0 11.200V3.100c0-1 .8-1.800 1.800-1.800h.7zM1.600 4.600v6.500c0 .2.100.3.300.3h8.200c.2 0 .3-.1.300-.3V4.600z"/></svg></div>
<label id="l_filial" class="lbl" style="left:9.3px;top:113.6px;margin-left:-0.32px;transform:scaleX(1.0593)">Filial</label>
<div class="fc dk" style="left:9.1px;top:135.1px;width:233.8px"><span id="v_atlaz" style="margin-left:-0.45px;transform:scaleX(1.0422)">Atlaz</span><svg viewBox="0 0.3 12 7.4" preserveAspectRatio="none" width="10.80" height="6.50" fill="#111" style="left:216.70px;top:12.00px;color:#111"><path d="M1.500.3 6 4.700 10.500.3 12 1.800 6 7.700 0 1.800z"/></svg></div>
<label id="l_nome" class="lbl" style="left:270.9px;top:113.6px;margin-left:0.25px;transform:scaleX(0.9683)">Nome do assinante</label>
<div class="fc " style="left:271.0px;top:135.1px;width:233.0px"></div>
<label id="l_tipoc" class="lbl" style="left:532.4px;top:113.6px;margin-left:0.21px;transform:scaleX(0.9489)">Tipo da cobrança</label>
<div class="s2" style="left:532.2px;top:135.1px;width:228.7px;height:29.8px"><div id="tagb"><span style="left:3.3px;top:-.5px;line-height:16px;font-size:10.5px;font-weight:700;color:rgba(255,255,255,.75);letter-spacing:0">×</span><span id="tag" style="left:12.3px;top:-.5px;line-height:16px;margin-left:-0.75px;transform:scaleX(0.9804)">Mensalidade</span></div><span style="left:206.3px;top:6.3px;line-height:16px;font-size:11.5px;font-weight:700;color:#333;letter-spacing:0">×</span></div>
<label id="l_status" class="lbl" style="left:794.1px;top:113.6px;margin-left:0.15px;transform:scaleX(0.9497)">Status da cobrança</label>
<div class="fc dk" style="left:794.1px;top:135.1px;width:232.9px"><span id="v_pagos" style="margin-left:-0.50px;transform:scaleX(0.9874)">Pagos</span><svg viewBox="0 0.3 12 7.4" preserveAspectRatio="none" width="10.80" height="6.50" fill="#111" style="left:215.90px;top:12.00px;color:#111"><path d="M1.500.3 6 4.700 10.500.3 12 1.800 6 7.700 0 1.800z"/></svg></div>
<label id="l_tipop" class="lbl" style="left:9.3px;top:181.6px;margin-left:0.31px;transform:scaleX(0.9413)">Tipo de pessoa</label>
<div class="fc ph" style="left:9.1px;top:203.2px;width:233.8px"><span id="v_todos1" style="margin-left:-0.45px;transform:scaleX(1.0476)">-- Todos --</span><svg viewBox="0 0.3 12 7.4" preserveAspectRatio="none" width="10.00" height="6.10" fill="#999" style="left:217.00px;top:12.00px;color:#999"><path d="M1.500.3 6 4.700 10.500.3 12 1.800 6 7.700 0 1.800z"/></svg></div>
<label id="l_pago" class="lbl" style="left:270.9px;top:181.6px;margin-left:0.30px;transform:scaleX(0.9367)">Pago via</label>
<div class="s2" style="left:271.0px;top:203.2px;width:229.2px;height:29.8px"></div>
<label id="l_caixa" class="lbl" style="left:532.4px;top:181.6px;margin-left:0.29px;transform:scaleX(0.9213)">Caixa</label>
<div class="fc ph" style="left:532.2px;top:203.2px;width:233.5px"><span id="v_todos2" style="margin-left:-0.20px;transform:scaleX(1.0446)">-- Todos --</span><svg viewBox="0 0.3 12 7.4" preserveAspectRatio="none" width="10.00" height="6.10" fill="#999" style="left:217.40px;top:12.00px;color:#999"><path d="M1.500.3 6 4.700 10.500.3 12 1.800 6 7.700 0 1.800z"/></svg></div>
<label id="l_res" class="lbl" style="left:794.1px;top:181.6px;margin-left:-0.50px;transform:scaleX(0.9609)">Resultados por página</label>
<div class="fc ph" style="left:794.1px;top:203.2px;width:232.9px"><span id="v_todos3" style="margin-left:0.15px;transform:scaleX(1.0476)">-- Todos --</span><svg viewBox="0 0.3 12 7.4" preserveAspectRatio="none" width="10.00" height="6.10" fill="#999" style="left:216.20px;top:12.00px;color:#999"><path d="M1.500.3 6 4.700 10.500.3 12 1.800 6 7.700 0 1.800z"/></svg></div>
<div id="inner"><div style="left:0;top:-1px;width:1046px;height:1px;background:#e8ebef"></div><span id="adv" style="margin-left:-0.87px;transform:scaleX(1.0339)">Filtros avançados</span></div>
<div id="btnb"><span id="btn" style="margin-left:-0.23px;transform:scaleX(1.0567)">Aplicar filtro</span></div>
</div>
<svg viewBox="0 0 1308 907" width="1308" height="907" style="left:0;top:0;pointer-events:none">
<g fill="#ff0000">
<path d="M103.5 579.3 L225.9 586.5 L226.1 582.5 L103.7 576.4Z"/><path d="M83.9 576.8 L104.1 572.1 L103.1 583.4Z"/><circle cx="226.0" cy="584.5" r="2.0"/>
<path d="M133.0 643.2 L246.5 656.9 L246.9 652.9 L133.4 640.3Z"/><path d="M114.1 639.5 L133.7 636.1 L132.7 647.7Z"/><circle cx="246.7" cy="654.9" r="2.0"/>
</g></svg>
<div id="edge"></div>
</body>
</html>
